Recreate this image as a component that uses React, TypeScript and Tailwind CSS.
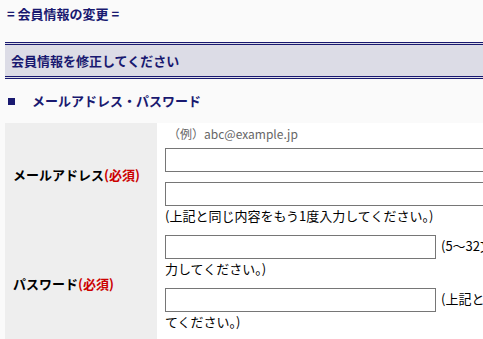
import React from 'react';

const font = { fontFamily: '"Noto Sans CJK JP", "Noto Sans", sans-serif' };

const Required: React.FC = () => <span className="text-[#cc0000]">(必須)</span>;

const TextBox: React.FC = () => (
  <input type="text" className="block h-[24px] w-[420px] border border-[#767676] bg-white" />
);

const InlineBox: React.FC = () => (
  <input
    type="text"
    className="mr-[5px] inline-block h-[24px] w-[271px] border border-[#767676] bg-white align-middle"
  />
);

export default function App() {
  return (
    <div className="min-h-screen w-[483px] overflow-hidden bg-[#fafafa] text-black" style={font}>
      <div className="w-[641px]">
        <h1 className="pl-[7px] pt-[5px] text-[13px] font-bold leading-[18px] text-[#191970]">
          = 会員情報の変更 =
        </h1>

        <div className="ml-[5px] mt-[19px] h-[37px] border-y-[3px] border-double border-[#191970] bg-[#dcdce6] pl-[6px] text-[13px] font-bold leading-[31px] text-[#191970]">
          会員情報を修正してください
        </div>

        <div className="flex h-[44px] items-center pl-[8px] text-[13px] font-bold text-[#191970]">
          <span className="mr-[17px] block h-[7px] w-[7px] bg-[#191970]" />
          メールアドレス・パスワード
        </div>

        <div className="ml-[5px] grid grid-cols-[152px_1fr] text-[13px]">
          <div className="flex h-[108px] items-center bg-[#eeeeee] pb-[4px] pl-[8px] font-bold">
            メールアドレス<Required />
          </div>
          <div className="bg-white pl-[8px] pt-[1px]">
            <div className="pl-[3px] text-[12px] leading-[19px] text-[#666666]">（例）abc@example.jp</div>
            <div className="mt-[5px]">
              <TextBox />
            </div>
            <div className="mt-[10px]">
              <TextBox />
            </div>
            <div className="leading-[20px]">(上記と同じ内容をもう1度入力してください。)</div>
          </div>

          <div className="flex h-[112px] items-center bg-[#eeeeee] pb-[6px] pl-[8px] font-bold">
            パスワード<Required />
          </div>
          <div className="bg-white pl-[8px] pt-[4px]">
            <div className="leading-[20px]">
              <InlineBox />
              (5～32文字の半角英数字記号で入力してください。)
            </div>
            <div className="mt-[9px] leading-[20px]">
              <InlineBox />
              (上記と同じ内容をもう1度入力してください。)
            </div>
          </div>
        </div>
      </div>
    </div>
  );
}
